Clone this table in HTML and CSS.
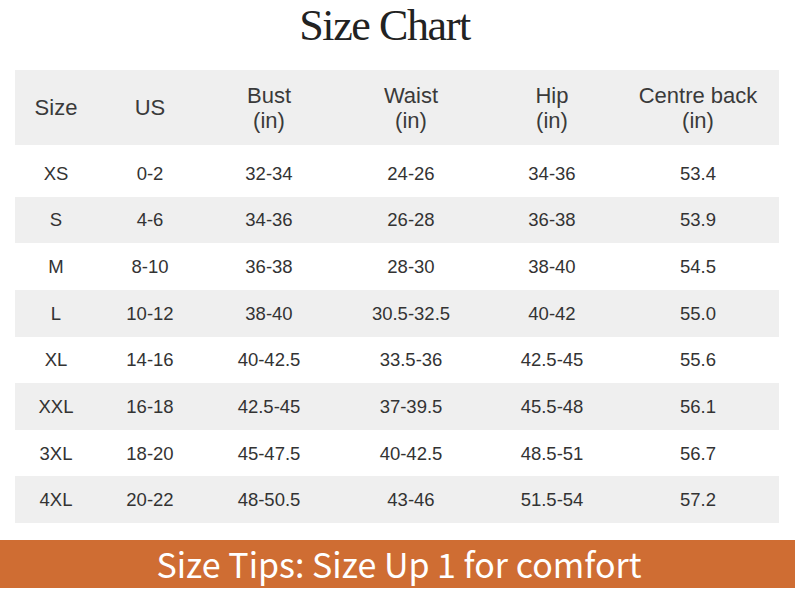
FILE: index.html
```html
<!DOCTYPE html>
<html lang="en">
<head>
<meta charset="utf-8">
<title>Size Chart</title>
<link rel="stylesheet" href="styles.css">
</head>
<body>
<h1 class="title">Size Chart</h1>
<div class="chart">
  <div class="row head">
    <div class="cell">Size</div>
    <div class="cell">US</div>
    <div class="cell">Bust<br>(in)</div>
    <div class="cell">Waist<br>(in)</div>
    <div class="cell">Hip<br>(in)</div>
    <div class="cell">Centre back<br>(in)</div>
  </div>
  <div class="body">
    <div class="row"><div class="cell">XS</div><div class="cell">0-2</div><div class="cell">32-34</div><div class="cell">24-26</div><div class="cell">34-36</div><div class="cell">53.4</div></div>
    <div class="row alt"><div class="cell">S</div><div class="cell">4-6</div><div class="cell">34-36</div><div class="cell">26-28</div><div class="cell">36-38</div><div class="cell">53.9</div></div>
    <div class="row"><div class="cell">M</div><div class="cell">8-10</div><div class="cell">36-38</div><div class="cell">28-30</div><div class="cell">38-40</div><div class="cell">54.5</div></div>
    <div class="row alt"><div class="cell">L</div><div class="cell">10-12</div><div class="cell">38-40</div><div class="cell">30.5-32.5</div><div class="cell">40-42</div><div class="cell">55.0</div></div>
    <div class="row"><div class="cell">XL</div><div class="cell">14-16</div><div class="cell">40-42.5</div><div class="cell">33.5-36</div><div class="cell">42.5-45</div><div class="cell">55.6</div></div>
    <div class="row alt"><div class="cell">XXL</div><div class="cell">16-18</div><div class="cell">42.5-45</div><div class="cell">37-39.5</div><div class="cell">45.5-48</div><div class="cell">56.1</div></div>
    <div class="row"><div class="cell">3XL</div><div class="cell">18-20</div><div class="cell">45-47.5</div><div class="cell">40-42.5</div><div class="cell">48.5-51</div><div class="cell">56.7</div></div>
    <div class="row alt"><div class="cell">4XL</div><div class="cell">20-22</div><div class="cell">48-50.5</div><div class="cell">43-46</div><div class="cell">51.5-54</div><div class="cell">57.2</div></div>
  </div>
</div>
<div class="tips">Size Tips: Size Up 1 for comfort</div>
</body>
</html>
```
FILE: styles.css
```css
html, body {
  margin: 0;
  padding: 0;
  background: #ffffff;
}
body {
  width: 795px;
  height: 597px;
  overflow: hidden;
  font-family: "Liberation Sans", Arial, sans-serif;
  color: #333333;
}
.title {
  margin: 0;
  height: 70px;
  padding-right: 26px;
  box-sizing: border-box;
  font-family: "Liberation Serif", "Times New Roman", serif;
  font-weight: normal;
  font-size: 44px;
  letter-spacing: -1.4px;
  line-height: 52px;
  text-align: center;
  color: #222222;
}
.chart {
  margin-left: 15px;
  width: 764px;
}
.row {
  display: grid;
  grid-template-columns: 82px 106px 132px 152px 130px 162px;
  align-items: center;
  height: 46.625px;
  text-align: center;
  font-size: 18.5px;
  padding-top: 1px;
  box-sizing: border-box;
}
.row.alt,
.row.head {
  background: #efefef;
}
.row.head {
  height: 75px;
  padding-top: 0;
  font-size: 22px;
  line-height: 25px;
  color: #3a3a3a;
}
.body {
  margin-top: 5px;
}
.tips {
  margin-top: 17px;
  height: 48px;
  background: #cf6d33;
  color: #ffffff;
  font-family: "Noto Sans CJK SC", "Noto Sans", sans-serif;
  font-size: 34px;
  line-height: 48px;
  text-align: center;
  padding-left: 3px;
}
```
